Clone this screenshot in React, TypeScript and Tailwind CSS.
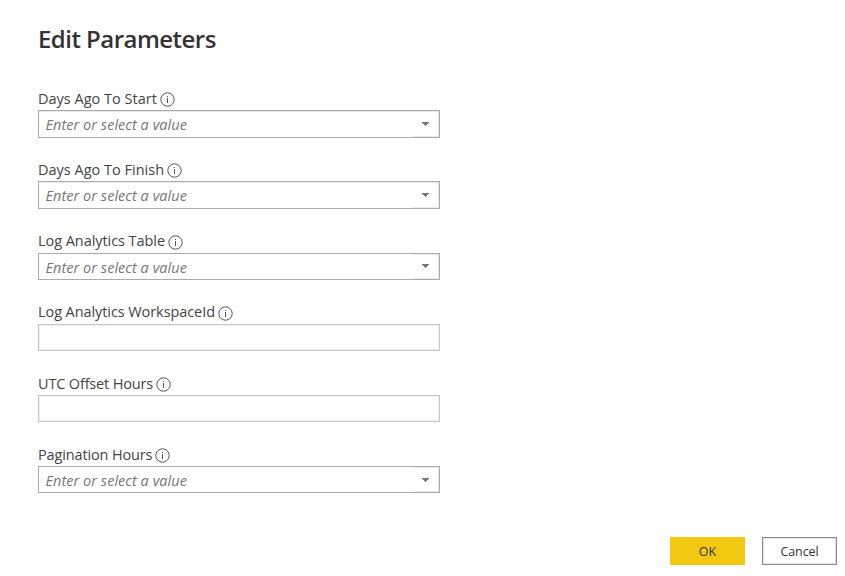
type FieldProps = {
  label: string;
  select?: boolean;
  tracking: string;
  gap?: string;
  box?: string;
  inner?: string;
  margin?: string;
  arrow?: string;
  lift?: string;
};

function InfoIcon() {
  return (
    <svg width="15" height="15" viewBox="0 0 15 15" fill="none" className="mt-[2px] shrink-0">
      <circle cx="7.5" cy="7.5" r="6.7" stroke="#4c4c4c" strokeWidth="0.95" />
      <path d="M7.5 6V11" stroke="#555" strokeWidth="1" />
      <path d="M7.5 4V5" stroke="#555" strokeWidth="1" />
    </svg>
  );
}

function Field({
  label,
  select,
  tracking,
  gap = "gap-[3px]",
  box = "h-[27px]",
  inner = "",
  margin = "mb-[23px]",
  arrow = "pt-[10px]",
  lift = "",
}: FieldProps) {
  return (
    <div className={margin}>
      <div className={`flex h-[21px] items-center pb-[2px] ${gap}`}>
        <label className={`whitespace-nowrap text-[14.5px] leading-[19px] text-[#444] ${tracking} ${lift}`}>{label}</label>
        <InfoIcon />
      </div>
      {select ? (
        <div className={`flex w-[402px] border border-[#ababab] ${box}`}>
          <div className={`flex flex-1 items-center pl-[6.5px] text-[14.5px] leading-[20px] tracking-[0.04px] text-[#767676] italic ${inner || "pt-[2px]"}`}>
            Enter or select a value
          </div>
          <div className={`flex w-[26px] justify-center border-y border-r border-[#e9e9e9] ${arrow}`}>
            <svg width="7" height="4" viewBox="0 0 7 4" shapeRendering="crispEdges" fill="#777">
              <path d="M0 0h7v1H0zM1 1h5v1H1zM2 2h3v1H2zM3 3h1v1H3z" />
            </svg>
          </div>
        </div>
      ) : (
        <div className={`w-[402px] border border-[#c6c6c6] ${box}`}>
          <div className="h-full border border-[#f0f0f0]" />
        </div>
      )}
    </div>
  );
}

export default function App() {
  return (
    <main className="flex h-[576px] w-[845px] flex-col bg-white pl-[38px] font-['Open_Sans','Noto_Sans',sans-serif]">
      <h1 className="mt-[22px] h-[67px] text-[24px] leading-[34px] font-semibold tracking-[-0.53px] text-[#333]">
        Edit Parameters
      </h1>
      <div className="h-[427px]">
        <Field
          label="Days Ago To Start"
          select
          tracking="tracking-[0px]"
          box="h-[28px]"
          inner="border-t border-[#e9e9e9] pt-[1px]"
          margin="mb-[22px]"
        />
        <Field
          label="Days Ago To Finish"
          select
          tracking="tracking-[0px]"
          box="h-[28px]"
          inner="border-t border-[#e9e9e9] pt-[1px]"
        />
        <Field label="Log Analytics Table" select tracking="tracking-[-0.06px]" arrow="pt-[9px]" lift="pb-[2px]" />
        <Field label="Log Analytics WorkspaceId" tracking="tracking-[-0.08px]" lift="pb-[2px]" />
        <Field label="UTC Offset Hours" tracking="tracking-[-0.16px]" />
        <Field label="Pagination Hours" select tracking="tracking-[-0.14px]" />
      </div>
      <div className="mt-[21px] mr-[8px] flex justify-end gap-[17px] text-[12.5px] text-[#333]">
        <button className="h-[28px] w-[75px] bg-[#f2c811] pt-[2px]">OK</button>
        <button className="h-[28px] w-[75px] border border-[#888]">
          <span className="flex h-full items-center justify-center border border-[#e5e5e5] pt-[2px] tracking-[-0.08px]">
            Cancel
          </span>
        </button>
      </div>
    </main>
  );
}
